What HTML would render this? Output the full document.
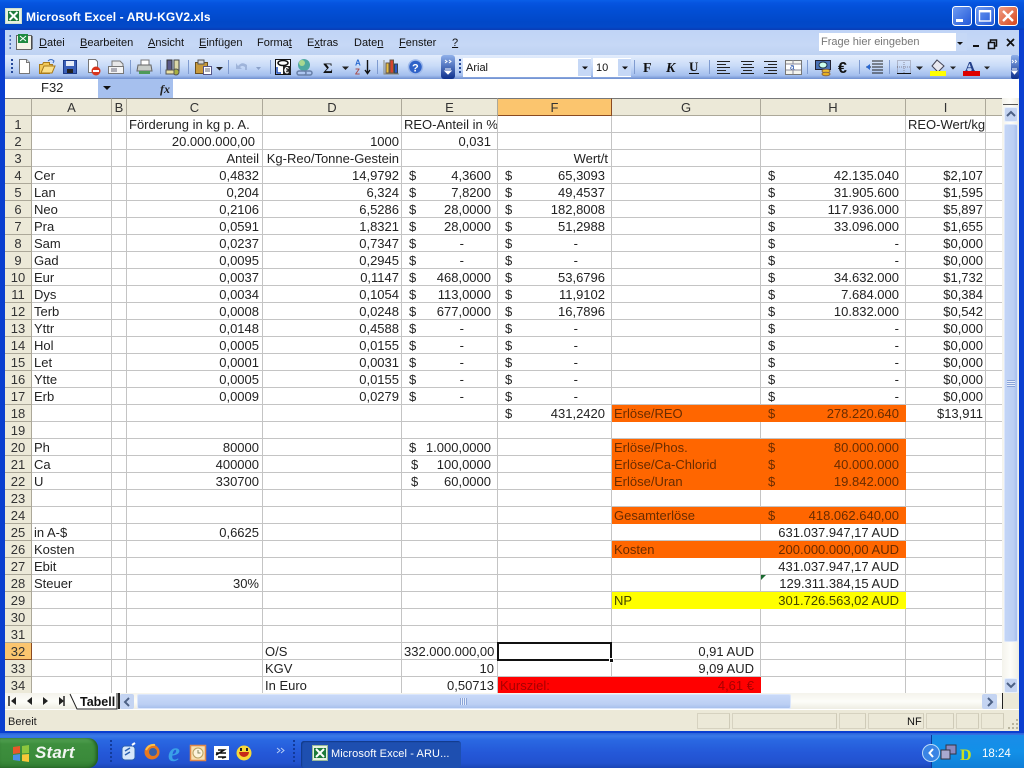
<!DOCTYPE html>
<html><head><meta charset="utf-8"><title>Microsoft Excel - ARU-KGV2.xls</title>
<style>
html,body{margin:0;padding:0;width:1024px;height:768px;overflow:hidden;background:#0a3fd0}
*{box-sizing:border-box}
body{font-family:"Liberation Sans",Arial,sans-serif;position:relative}
.p{position:absolute}
.t{position:absolute;white-space:nowrap;line-height:14px}
#title{left:0;top:0;width:1024px;height:30px;background:linear-gradient(#0a5fe8 0,#0654e0 3px,#0350d8 8px,#0148c8 22px,#0349c8 27px,#0a3cb4 30px)}
#menu{left:5px;top:30px;width:1014px;height:25px;background:linear-gradient(#c0d4f6,#c6d8f6 60%,#bed2f2)}
#menu .t{font-size:11px;color:#111;top:6px}
#tb{left:5px;top:55px;width:1014px;height:24px;background:linear-gradient(#e3edfc,#c9dbf8 45%,#a4bfee 85%,#6f90d0)}
#fx{left:5px;top:79px;width:1014px;height:19px;background:#fff}
table{position:absolute;left:5px;top:98px;width:998px;border-collapse:separate;border-spacing:0;table-layout:fixed;font-size:13px;color:#222;background:#fff}
td{height:17px;padding:2px 3px 0 2px;line-height:14px;border-right:1px solid #c4c4c4;border-bottom:1px solid #c4c4c4;white-space:nowrap;overflow:hidden}
td.h{background:#ece9d8;text-align:center;padding:2px 0 0;border-right:1px solid #aca899;border-bottom:1px solid #aca899;color:#333}
tr.hh td{height:18px;border-top:1px solid #777}
td.s{background:#fbc56e;border-right:1px solid #8a4a20;border-bottom:1px solid #8a4a20}
.r{text-align:right}.a{text-align:right;padding-right:6px}.m{padding-right:7px}.e{text-align:right;padding-right:2px}.e4{text-align:right;padding-right:3px}
i{font-style:normal;float:left;margin-left:5px}i.w{margin-left:7px}
.d{padding-right:33px}.dh{padding-right:6px}
.o{background:#ff6600;color:#6a2c00;border-color:#ff6600}
.y{background:#ffff00;color:#444400;border-color:#ffff00}
.x{background:#ff0000;color:#a80000;border-color:#ff0000}
#status{left:5px;top:710px;width:1014px;height:21px;background:#ece9d8;font-size:11px;color:#222}
.pn{position:absolute;top:3px;height:16px;border:1px solid #d6d2c0;border-right-color:#cfcbb8}
#task{left:0;top:733px;width:1024px;height:35px;background:linear-gradient(#2a62d8 0,#3a7ae8 3px,#2a68e2 7px,#2458d8 20px,#2252cf 30px,#1a45b5 35px)}
</style></head><body>
<div class="p" id="title">
<svg class="p" style="left:5px;top:8px" width="17" height="16" viewBox="0 0 17 16"><rect x=".5" y=".5" width="16" height="15" fill="#e8f2e0" stroke="#cfe0cf"/><rect x="3" y="3" width="11" height="10" fill="#1d7a3a"/><path d="M4.5 4l8 8M12.5 4l-8 8" stroke="#fff" stroke-width="2"/></svg>
<div class="t" style="left:26px;top:10px;color:#fff;font-weight:bold;font-size:12px;letter-spacing:.1px">Microsoft Excel - ARU-KGV2.xls</div>
<svg class="p" style="left:950px;top:5px" width="70" height="22" viewBox="0 0 70 22">
<defs><linearGradient id="bb" x1="0" y1="0" x2="1" y2="1"><stop offset="0" stop-color="#6f9cf2"/><stop offset="1" stop-color="#2257d8"/></linearGradient><linearGradient id="br" x1="0" y1="0" x2="1" y2="1"><stop offset="0" stop-color="#f0a088"/><stop offset="1" stop-color="#d84418"/></linearGradient></defs>
<rect x="2.5" y="1.5" width="19" height="19" rx="3" fill="url(#bb)" stroke="#fff"/><rect x="6" y="14" width="7" height="3" fill="#fff"/>
<rect x="25.5" y="1.5" width="19" height="19" rx="3" fill="url(#bb)" stroke="#fff"/><rect x="29.5" y="6" width="11" height="10" fill="none" stroke="#fff" stroke-width="1.4"/><rect x="29" y="5" width="12" height="2.4" fill="#fff"/>
<rect x="48.5" y="1.5" width="19" height="19" rx="3" fill="url(#br)" stroke="#fff"/><path d="M53 6l10 10M63 6l-10 10" stroke="#fff" stroke-width="2.4"/></svg>
</div>
<div class="p" id="menu">
<svg class="p" style="left:3px;top:2px" width="28" height="20" viewBox="0 0 28 20"><path d="M1.5 4h1.5M1.5 8h1.5M1.5 12h1.5M1.5 16h1.5" stroke="#24489a" stroke-width="1.6"/><rect x="8.5" y="3.5" width="15" height="14" fill="#f4f4e8" stroke="#666"/><rect x="10" y="2" width="10" height="9" fill="#1d8a40"/><path d="M12 4l6 5M18 4l-6 5" stroke="#fff"/><path d="M24 4v13" stroke="#333"/></svg>
<div class="t" style="left:34px"><u>D</u>atei</div>
<div class="t" style="left:75px"><u>B</u>earbeiten</div>
<div class="t" style="left:143px"><u>A</u>nsicht</div>
<div class="t" style="left:194px"><u>E</u>infügen</div>
<div class="t" style="left:252px">Forma<u>t</u></div>
<div class="t" style="left:302px">E<u>x</u>tras</div>
<div class="t" style="left:349px">Date<u>n</u></div>
<div class="t" style="left:394px"><u>F</u>enster</div>
<div class="t" style="left:447px"><u>?</u></div>
<div class="p" style="left:814px;top:3px;width:138px;height:18px;background:#fff"></div>
<div class="t" style="left:816px;top:5px;color:#777">Frage hier eingeben</div>
<div class="p" style="left:951px;top:3px;width:11px;height:18px;background:#c6d8f6"></div>
<svg class="p" style="left:946px;top:4px" width="68" height="18" viewBox="0 0 68 18"><path d="M6 8h6l-3 3z" fill="#111"/><rect x="22" y="11" width="6" height="2" fill="#111"/><path d="M37.5 8.5h6v6h-6zM39.5 8.5v-2.500h6v6h-2" fill="none" stroke="#111" stroke-width="1.5"/><path d="M56 5l7 7M63 5l-7 7" stroke="#111" stroke-width="1.8"/></svg>
</div>
<div class="p" id="tb">
<svg class="p" style="left:0;top:0" width="1014" height="24" viewBox="5 55 1014 24">
<defs><linearGradient id="ch" x1="0" y1="0" x2="0" y2="1"><stop offset="0" stop-color="#8fb0ea"/><stop offset="1" stop-color="#0c2f8c"/></linearGradient></defs>
<path d="M11 60h2M11 64h2M11 68h2M11 72h2" stroke="#24489a" stroke-width="2"/>
<path d="M19.5 59.5h7l3 3v11h-10z" fill="#fff" stroke="#777"/><path d="M26.5 59.5v3h3" fill="#ddd" stroke="#777"/>
<path d="M39.5 64.500h3l1-2h6v2h3l-3 9h-10z" fill="#f2c95a" stroke="#a87a1a"/><path d="M41 73l3-7h11l-3 7z" fill="#fbe08a" stroke="#a87a1a"/><path d="M48 61q3-3 6 0l-1 2" fill="none" stroke="#3a6ac0"/>
<rect x="63.5" y="60.5" width="13" height="13" fill="#3a5fb8" stroke="#1c3a88"/><rect x="66" y="61" width="8" height="5" fill="#e6ecf8"/><rect x="67" y="69" width="6" height="4" fill="#222"/>
<path d="M88.5 59.5h7l2 2v11h-9z" fill="#fff" stroke="#777"/><circle cx="96" cy="71" r="4.5" fill="#d8351c"/><rect x="93" y="70" width="6" height="2" fill="#fff"/>
<path d="M112 61h8l3 3v9h-11z" fill="#e8e8e8" stroke="#777"/><rect x="108.5" y="66.5" width="15" height="7" fill="#f4f4f4" stroke="#777"/><path d="M111 69h6M111 71h6" stroke="#667"/>
<path d="M130.5 60v14M160.5 60v14M188.5 60v14M228.5 60v14M270.5 60v14M377.5 60v14" stroke="#7f9bd0"/>
<path d="M141 60h8v5h-8z" fill="#fff" stroke="#777"/><path d="M138 65h13l1 6h-15z" fill="#c8ccc8" stroke="#666"/><rect x="139" y="71" width="11" height="3" fill="#4f9a58"/>
<rect x="167" y="60" width="5" height="11" fill="#5a5a8a" stroke="#333"/><rect x="174" y="60" width="5" height="11" fill="#dcd8a8" stroke="#444"/><circle cx="176" cy="72" r="3" fill="#a8b040" stroke="#555"/><rect x="166" y="70" width="8" height="4" fill="#eae0a0" stroke="#555"/>
<rect x="195.5" y="62.5" width="12" height="11" fill="#c89a3c" stroke="#6a5020"/><rect x="198" y="60" width="6" height="4" fill="#d8d8d8" stroke="#555"/><rect x="203.5" y="66.5" width="8" height="8" fill="#fff" stroke="#558"/><path d="M205 69h5M205 71h5" stroke="#667"/>
<path d="M216 67h7l-3.5 3.5z" fill="#222"/>
<path d="M238 66q4-5 9-1v5h-2v-3q-3-2-5 0l2 2h-6v-6z" fill="#9fb4da"/><path d="M256 67h5l-2.5 3z" fill="#8aa0c8"/>
<rect x="275.5" y="59.5" width="15" height="15" fill="#fff" stroke="#111"/><ellipse cx="283" cy="63" rx="5" ry="2.5" fill="none" stroke="#111" stroke-width="1.5"/><rect x="283" y="66" width="8" height="8" fill="#222"/><text x="284" y="73.5" font-size="9" font-weight="bold" fill="#fff" font-family="Liberation Sans">€</text><path d="M277 67v6h4" stroke="#1848b8" fill="none" stroke-width="1.5"/>
<circle cx="304" cy="65" r="6" fill="#4fa8a0"/><circle cx="302" cy="63" r="3" fill="#a8d890"/><path d="M299 71h5a2 2 0 0 1 0 4h-5a2 2 0 0 1 0-4zM305 71h5a2 2 0 0 1 0 4h-5" fill="none" stroke="#6880a8" stroke-width="1.5"/>
<text x="323" y="73" font-size="15" font-weight="bold" fill="#111" font-family="Liberation Serif">Σ</text><path d="M342 66.500h7l-3.5 3.5z" fill="#222"/>
<text x="355" y="65.500" font-size="8" font-weight="bold" fill="#2a6ad0" font-family="Liberation Sans">A</text><text x="355" y="74.5" font-size="8" font-weight="bold" fill="#a85050" font-family="Liberation Sans">Z</text><path d="M367.5 60v13M365 70l2.5 3.5 2.500-3.5" stroke="#111" fill="none" stroke-width="1.4"/>
<path d="M384 60v14h15" fill="none" stroke="#887"/><rect x="386" y="63" width="3" height="10" fill="#e8c040" stroke="#654"/><rect x="390" y="60" width="3.5" height="13" fill="#d8442c" stroke="#654"/><rect x="394.5" y="64" width="3" height="9" fill="#2a58c8" stroke="#345"/>
<circle cx="415.5" cy="67" r="7" fill="#2f62c8" stroke="#9db8ea" stroke-width="1.5"/><text x="412" y="71.5" font-size="11" font-weight="bold" fill="#fff" font-family="Liberation Sans">?</text>
<rect x="441" y="55" width="14" height="24" rx="3" fill="url(#ch)"/><path d="M445 60l2 1.5-2 1.5M449 60l2 1.5-2 1.5" stroke="#fff" fill="none"/><path d="M445 69h6M445 71h6l-3 3z" stroke="#fff" fill="#fff"/>
<path d="M459 60h2M459 64h2M459 68h2M459 72h2" stroke="#24489a" stroke-width="2"/>
<rect x="463" y="58" width="128" height="19" fill="#fff"/><rect x="578" y="59" width="13" height="17" fill="#c6d8f6"/><path d="M582 66.500h6l-3 3z" fill="#111"/>
<rect x="593" y="58" width="38" height="19" fill="#fff"/><rect x="618" y="59" width="13" height="17" fill="#c6d8f6"/><path d="M622 66.500h6l-3 3z" fill="#111"/>
<path d="M634.5 60v14M709.5 60v14M807.5 60v14M859.5 60v14M889.5 60v14" stroke="#7f9bd0"/>
<text x="466" y="71" font-size="11" fill="#111" font-family="Liberation Sans">Arial</text><text x="596" y="71" font-size="11" fill="#111" font-family="Liberation Sans">10</text>
<text x="643" y="72" font-size="14" font-weight="bold" fill="#111" font-family="Liberation Serif">F</text><text x="666" y="72" font-size="14" font-weight="bold" font-style="italic" fill="#111" font-family="Liberation Serif">K</text><text x="689" y="71" font-size="13" font-weight="bold" fill="#111" font-family="Liberation Serif">U</text><path d="M689 73.5h10" stroke="#111"/>
<path d="M717 61.5h13M717 64.5h9M717 67.5h13M717 70.5h9M717 73.5h13M741 61.5h13M743 64.5h9M741 67.5h13M743 70.5h9M741 73.5h13M764 61.5h13M768 64.5h9M764 67.5h13M768 70.5h9M764 73.5h13" stroke="#222"/>
<rect x="785.5" y="60.5" width="16" height="14" fill="#f4f4ee" stroke="#777"/><rect x="786" y="64" width="15" height="6" fill="#fff"/><path d="M786 64h15M786 70h15M793 60v4M793 70v4" stroke="#889"/><text x="790" y="69.5" font-size="8" fill="#1848a8" font-family="Liberation Sans">a</text>
<rect x="815.5" y="60.5" width="15" height="9" fill="#4a72b8" stroke="#223"/><ellipse cx="823" cy="65" rx="4" ry="3" fill="#cfe" stroke="#234"/><ellipse cx="826" cy="71" rx="4" ry="1.8" fill="#f0c030" stroke="#864"/><ellipse cx="826" cy="74" rx="4" ry="1.8" fill="#e8b020" stroke="#864"/>
<text x="838" y="73" font-size="16" font-weight="bold" fill="#111" font-family="Liberation Sans">€</text>
<path d="M872 61h11M872 64h11M872 67h11M872 70h11M872 73h11M866 67h5" stroke="#222"/><path d="M866 67l4-3v6z" fill="#2a68d0"/>
<path d="M897.5 60.5h13v13h-13zM904 60v14M897 67h14" fill="none" stroke="#889" stroke-dasharray="1 1"/><path d="M897 73.5h14" stroke="#111"/><path d="M916 66.500h7l-3.5 3.5z" fill="#222"/>
<path d="M937 60l7 6-6 6-6-6z" fill="#e8e8f0" stroke="#445"/><rect x="930" y="71" width="16" height="5" fill="#ffff00"/><path d="M950 66.500h6l-3 3z" fill="#222"/>
<text x="965" y="71" font-size="14" font-weight="bold" fill="#24408a" font-family="Liberation Serif">A</text><rect x="963" y="71" width="17" height="5" fill="#dd0000"/><path d="M984 66.500h6l-3 3z" fill="#222"/>
<rect x="1011" y="55" width="8" height="24" rx="2" fill="url(#ch)"/><path d="M1012 60l1.5 1.5-1.5 1.5M1015 60l1.5 1.5-1.5 1.5" stroke="#fff" fill="none"/><path d="M1012 69h5M1012 71h5l-2.5 3z" stroke="#fff" fill="#fff"/>
</svg>
</div>
<div class="p" id="fx">
<div class="p" style="left:93px;top:0;width:75px;height:19px;background:#a6c0ee"></div>
<div class="t" style="left:36px;top:2px;font-size:13px;color:#222">F32</div>
<svg class="p" style="left:98px;top:6px" width="10" height="8"><path d="M0 1h8l-4 4z" fill="#111"/></svg>
<div class="t" style="left:155px;top:3px;font:italic bold 12px/14px 'Liberation Serif',serif;color:#222">fx</div>
</div>
<table>
<colgroup><col style="width:27px"><col style="width:80px"><col style="width:15px"><col style="width:136px"><col style="width:139px"><col style="width:96px"><col style="width:114px"><col style="width:149px"><col style="width:145px"><col style="width:80px"><col style="width:17px"></colgroup>
<tr class="hh"><td class="h"></td><td class="h">A</td><td class="h">B</td><td class="h">C</td><td class="h">D</td><td class="h">E</td><td class="h s">F</td><td class="h">G</td><td class="h">H</td><td class="h">I</td><td class="h"></td></tr>
<tr><td class="h">1</td><td></td><td></td><td>Förderung in kg p. A.</td><td></td><td>REO-Anteil in %</td><td></td><td></td><td></td><td>REO-Wert/kg</td><td></td></tr>
<tr><td class="h">2</td><td></td><td></td><td class="r m">20.000.000,00</td><td class="e">1000</td><td class="a">0,031</td><td></td><td></td><td></td><td></td><td></td></tr>
<tr><td class="h">3</td><td></td><td></td><td class="r">Anteil</td><td class="e">Kg-Reo/Tonne-Gestein</td><td></td><td class="r">Wert/t</td><td></td><td></td><td></td><td></td></tr>
<tr><td class="h">4</td><td>Cer</td><td></td><td class="r">0,4832</td><td class="e">14,9792</td><td class="a"><i>$</i>4,3600</td><td class="a"><i>$</i>65,3093</td><td></td><td class="a"><i>$</i>42.135.040</td><td class="e">$2,107</td><td></td></tr>
<tr><td class="h">5</td><td>Lan</td><td></td><td class="r">0,204</td><td class="e">6,324</td><td class="a"><i>$</i>7,8200</td><td class="a"><i>$</i>49,4537</td><td></td><td class="a"><i>$</i>31.905.600</td><td class="e">$1,595</td><td></td></tr>
<tr><td class="h">6</td><td>Neo</td><td></td><td class="r">0,2106</td><td class="e">6,5286</td><td class="a"><i>$</i>28,0000</td><td class="a"><i>$</i>182,8008</td><td></td><td class="a"><i>$</i>117.936.000</td><td class="e">$5,897</td><td></td></tr>
<tr><td class="h">7</td><td>Pra</td><td></td><td class="r">0,0591</td><td class="e">1,8321</td><td class="a"><i>$</i>28,0000</td><td class="a"><i>$</i>51,2988</td><td></td><td class="a"><i>$</i>33.096.000</td><td class="e">$1,655</td><td></td></tr>
<tr><td class="h">8</td><td>Sam</td><td></td><td class="r">0,0237</td><td class="e">0,7347</td><td class="a d"><i>$</i>-</td><td class="a d"><i>$</i>-</td><td></td><td class="a dh"><i>$</i>-</td><td class="e">$0,000</td><td></td></tr>
<tr><td class="h">9</td><td>Gad</td><td></td><td class="r">0,0095</td><td class="e">0,2945</td><td class="a d"><i>$</i>-</td><td class="a d"><i>$</i>-</td><td></td><td class="a dh"><i>$</i>-</td><td class="e">$0,000</td><td></td></tr>
<tr><td class="h">10</td><td>Eur</td><td></td><td class="r">0,0037</td><td class="e">0,1147</td><td class="a"><i>$</i>468,0000</td><td class="a"><i>$</i>53,6796</td><td></td><td class="a"><i>$</i>34.632.000</td><td class="e">$1,732</td><td></td></tr>
<tr><td class="h">11</td><td>Dys</td><td></td><td class="r">0,0034</td><td class="e">0,1054</td><td class="a"><i>$</i>113,0000</td><td class="a"><i>$</i>11,9102</td><td></td><td class="a"><i>$</i>7.684.000</td><td class="e">$0,384</td><td></td></tr>
<tr><td class="h">12</td><td>Terb</td><td></td><td class="r">0,0008</td><td class="e">0,0248</td><td class="a"><i>$</i>677,0000</td><td class="a"><i>$</i>16,7896</td><td></td><td class="a"><i>$</i>10.832.000</td><td class="e">$0,542</td><td></td></tr>
<tr><td class="h">13</td><td>Yttr</td><td></td><td class="r">0,0148</td><td class="e">0,4588</td><td class="a d"><i>$</i>-</td><td class="a d"><i>$</i>-</td><td></td><td class="a dh"><i>$</i>-</td><td class="e">$0,000</td><td></td></tr>
<tr><td class="h">14</td><td>Hol</td><td></td><td class="r">0,0005</td><td class="e">0,0155</td><td class="a d"><i>$</i>-</td><td class="a d"><i>$</i>-</td><td></td><td class="a dh"><i>$</i>-</td><td class="e">$0,000</td><td></td></tr>
<tr><td class="h">15</td><td>Let</td><td></td><td class="r">0,0001</td><td class="e">0,0031</td><td class="a d"><i>$</i>-</td><td class="a d"><i>$</i>-</td><td></td><td class="a dh"><i>$</i>-</td><td class="e">$0,000</td><td></td></tr>
<tr><td class="h">16</td><td>Ytte</td><td></td><td class="r">0,0005</td><td class="e">0,0155</td><td class="a d"><i>$</i>-</td><td class="a d"><i>$</i>-</td><td></td><td class="a dh"><i>$</i>-</td><td class="e">$0,000</td><td></td></tr>
<tr><td class="h">17</td><td>Erb</td><td></td><td class="r">0,0009</td><td class="e">0,0279</td><td class="a d"><i>$</i>-</td><td class="a d"><i>$</i>-</td><td></td><td class="a dh"><i>$</i>-</td><td class="e">$0,000</td><td></td></tr>
<tr><td class="h">18</td><td></td><td></td><td></td><td></td><td></td><td class="a"><i>$</i>431,2420</td><td class="o">Erlöse/REO</td><td class="a o"><i>$</i>278.220.640</td><td class="e">$13,911</td><td></td></tr>
<tr><td class="h">19</td><td></td><td></td><td></td><td></td><td></td><td></td><td></td><td></td><td></td><td></td></tr>
<tr><td class="h">20</td><td>Ph</td><td></td><td class="r">80000</td><td></td><td class="a"><i>$</i>1.000,0000</td><td></td><td class="o">Erlöse/Phos.</td><td class="a o"><i>$</i>80.000.000</td><td></td><td></td></tr>
<tr><td class="h">21</td><td>Ca</td><td></td><td class="r">400000</td><td></td><td class="a"><i class="w">$</i>100,0000</td><td></td><td class="o">Erlöse/Ca-Chlorid</td><td class="a o"><i>$</i>40.000.000</td><td></td><td></td></tr>
<tr><td class="h">22</td><td>U</td><td></td><td class="r">330700</td><td></td><td class="a"><i class="w">$</i>60,0000</td><td></td><td class="o">Erlöse/Uran</td><td class="a o"><i>$</i>19.842.000</td><td></td><td></td></tr>
<tr><td class="h">23</td><td></td><td></td><td></td><td></td><td></td><td></td><td></td><td></td><td></td><td></td></tr>
<tr><td class="h">24</td><td></td><td></td><td></td><td></td><td></td><td></td><td class="o">Gesamterlöse</td><td class="a o"><i>$</i>418.062.640,00</td><td></td><td></td></tr>
<tr><td class="h">25</td><td>in A-$</td><td></td><td class="r">0,6625</td><td></td><td></td><td></td><td></td><td class="a">631.037.947,17 AUD</td><td></td><td></td></tr>
<tr><td class="h">26</td><td>Kosten</td><td></td><td></td><td></td><td></td><td></td><td class="o">Kosten</td><td class="a o">200.000.000,00 AUD</td><td></td><td></td></tr>
<tr><td class="h">27</td><td>Ebit</td><td></td><td></td><td></td><td></td><td></td><td></td><td class="a">431.037.947,17 AUD</td><td></td><td></td></tr>
<tr><td class="h">28</td><td>Steuer</td><td></td><td class="r">30%</td><td></td><td></td><td></td><td></td><td class="a">129.311.384,15 AUD</td><td></td><td></td></tr>
<tr><td class="h">29</td><td></td><td></td><td></td><td></td><td></td><td></td><td class="y">NP</td><td class="a y">301.726.563,02 AUD</td><td></td><td></td></tr>
<tr><td class="h">30</td><td></td><td></td><td></td><td></td><td></td><td></td><td></td><td></td><td></td><td></td></tr>
<tr><td class="h">31</td><td></td><td></td><td></td><td></td><td></td><td></td><td></td><td></td><td></td><td></td></tr>
<tr><td class="h s">32</td><td></td><td></td><td></td><td>O/S</td><td class="e4">332.000.000,00</td><td></td><td class="r" style="padding-right:6px">0,91 AUD</td><td></td><td></td><td></td></tr>
<tr><td class="h">33</td><td></td><td></td><td></td><td>KGV</td><td class="e4">10</td><td></td><td class="r" style="padding-right:6px">9,09 AUD</td><td></td><td></td><td></td></tr>
<tr><td class="h">34</td><td></td><td></td><td></td><td>In Euro</td><td class="e4">0,50713</td><td class="x">Kursziel:</td><td class="r x" style="padding-right:6px">4,61 €</td><td></td><td></td><td></td></tr>
</table>
<div class="p" style="left:497px;top:642px;width:115px;height:19px;border:2px solid #111"></div>
<div class="p" style="left:609px;top:658px;width:5px;height:5px;background:#111;border:1px solid #fff"></div>
<svg class="p" style="left:760px;top:574px" width="6" height="6"><path d="M1 1h5l-5 5z" fill="#1a6a30"/></svg>
<div class="p" style="left:1002px;top:98px;width:17px;height:595px;background:linear-gradient(90deg,#f4f3ec,#fdfdf9 50%,#eeede3)"></div>
<div class="p" style="left:1003px;top:104px;width:15px;height:1px;background:#555"></div>
<div class="p" style="left:1004px;top:107px;width:14px;height:15px;background:#c4d4f2;border:1px solid #e8f0fc;border-radius:2px"></div>
<svg class="p" style="left:1006px;top:110px" width="10" height="8"><path d="M1 6l4-4 4 4" fill="none" stroke="#4d6185" stroke-width="2"/></svg>
<div class="p" style="left:1004px;top:124px;width:14px;height:518px;background:linear-gradient(90deg,#c3d5f6,#bcd0f4 70%,#a8c0ec);border:1px solid #dbe6fb;border-radius:2px"></div>
<div class="p" style="left:1007px;top:380px;width:8px;height:7px;background:repeating-linear-gradient(#8aa4d8 0,#8aa4d8 1px,#e6eefc 1px,#e6eefc 2px)"></div>
<div class="p" style="left:1004px;top:678px;width:14px;height:15px;background:#c4d4f2;border:1px solid #e8f0fc;border-radius:2px"></div>
<svg class="p" style="left:1006px;top:681px" width="10" height="8"><path d="M1 2l4 4 4-4" fill="none" stroke="#4d6185" stroke-width="2"/></svg>
<div class="p" style="left:5px;top:693px;width:1014px;height:17px;background:linear-gradient(#f4f3ec,#fdfdf9 50%,#ecebe0)"></div>
<div class="p" style="left:5px;top:709px;width:1014px;height:1px;background:#fff"></div>
<svg class="p" style="left:5px;top:693px" width="115" height="17" viewBox="5 693 115 17"><path d="M9 696v10" stroke="#222" stroke-width="1.5"/><path d="M16 697l-5 4 5 4zM32 697l-5 4 5 4zM43 697l5 4-5 4zM59 697l5 4-5 4z" fill="#222"/><path d="M64 696v10" stroke="#222" stroke-width="1.5"/><path d="M70 694l7 15h40V693" fill="#fff" stroke="#222"/></svg>
<div class="t" style="left:80px;top:695px;font-size:12.5px;font-weight:bold;color:#111">Tabell</div>
<div class="p" style="left:118px;top:693px;width:2px;height:16px;background:#222"></div>
<div class="p" style="left:120px;top:694px;width:14px;height:15px;background:#c4d4f2;border-radius:2px"></div>
<svg class="p" style="left:123px;top:697px" width="8" height="10"><path d="M6 1L2 5l4 4" fill="none" stroke="#4d6185" stroke-width="2"/></svg>
<div class="p" style="left:137px;top:694px;width:654px;height:15px;background:linear-gradient(#c8d9f8,#bccff4 70%,#a8c0ec);border-radius:2px;border:1px solid #dbe6fb"></div>
<div class="p" style="left:460px;top:698px;width:7px;height:7px;background:repeating-linear-gradient(90deg,#8aa4d8 0,#8aa4d8 1px,#e6eefc 1px,#e6eefc 2px)"></div>
<div class="p" style="left:982px;top:694px;width:15px;height:15px;background:#c4d4f2;border-radius:2px"></div>
<svg class="p" style="left:986px;top:697px" width="8" height="10"><path d="M2 1l4 4-4 4" fill="none" stroke="#4d6185" stroke-width="2"/></svg>
<div class="p" style="left:1002px;top:693px;width:1px;height:16px;background:#222"></div>
<div class="p" style="left:1003px;top:693px;width:16px;height:16px;background:#ece9d8"></div>
<div class="p" id="status">
<div class="t" style="left:3px;top:5px">Bereit</div>
<div class="pn" style="left:692px;width:33px"></div><div class="pn" style="left:727px;width:105px"></div><div class="pn" style="left:834px;width:27px"></div><div class="pn" style="left:863px;width:56px"></div><div class="pn" style="left:921px;width:28px"></div><div class="pn" style="left:951px;width:23px"></div><div class="pn" style="left:976px;width:23px"></div>
<div class="t" style="left:902px;top:5px;color:#111">NF</div>
<svg class="p" style="left:1002px;top:8px" width="12" height="12"><path d="M9 1h2v2H9zM5 5h2v2H5zM9 5h2v2H9zM1 9h2v2H1zM5 9h2v2H5zM9 9h2v2H9z" fill="#b8b49e"/></svg>
</div>
<div class="p" id="task">
<div class="p" style="left:0;top:5px;width:98px;height:30px;background:linear-gradient(#5aa85a,#3e8f3e 20%,#3a8a3a 75%,#2f7a30);border-radius:0 10px 10px 0;box-shadow:inset -2px 0 3px #1f5a20"></div>
<svg class="p" style="left:11px;top:11px" width="20" height="19" viewBox="0 0 20 19"><path d="M2 3l7-1v7l-7 1z" fill="#e8582a"/><path d="M11 2l7-1v8l-7 .5z" fill="#8cc63e"/><path d="M2 11l7-1v7l-7-1z" fill="#4a90e8"/><path d="M11 10.5l7-.5v8l-7-1z" fill="#f8c838"/></svg>
<div class="t" style="left:35px;top:10px;font:italic bold 17px/20px 'Liberation Sans',sans-serif;color:#f2f6f2;letter-spacing:.2px">Start</div>
<svg class="p" style="left:105px;top:0" width="170" height="35" viewBox="105 733 170 35">
<path d="M110 741h2M110 745h2M110 749h2M110 753h2M110 757h2M110 761h2" stroke="#123a9a" stroke-width="2"/>
<rect x="122" y="746" width="13" height="14" rx="3" fill="#d8e8fa" stroke="#2a60b0"/><path d="M125 751l5-3M125 755l5-3" stroke="#2a60b0" stroke-width="1.5"/><path d="M132 745l3-2" stroke="#fff" stroke-width="2"/>
<circle cx="152" cy="752" r="7.5" fill="#e8781e"/><circle cx="153" cy="752" r="4" fill="#3860a8"/><path d="M146 750q3-6 9-5" stroke="#fbc04a" stroke-width="2" fill="none"/>
<text x="168" y="761" font-size="27" font-weight="bold" font-style="italic" fill="#3aa0e8" font-family="Liberation Serif">e</text>
<rect x="190.5" y="745.5" width="15" height="15" fill="#f8e0b0" stroke="#e08848" stroke-width="1.5"/><circle cx="198" cy="753" r="5" fill="#fdf4dc" stroke="#b8a060"/><path d="M198 750v3h2.5" stroke="#886" fill="none"/>
<rect x="214" y="746" width="15" height="14" fill="#fff"/><path d="M216 755l8-5h-6M218 757h8l-4 1M216 753h10" stroke="#111" stroke-width="1.6" fill="none"/>
<circle cx="244" cy="753" r="7.5" fill="#f8d838"/><path d="M239 752h10a5 5 0 0 1-10 0z" fill="#c82818"/><rect x="240" y="748" width="2" height="3" fill="#222"/><rect x="246" y="748" width="2" height="3" fill="#222"/>
</svg>
<svg class="p" style="left:270px;top:0" width="30" height="35" viewBox="270 733 30 35"><path d="M277 748l3 2.5-3 2.5M281 748l3 2.5-3 2.500" fill="none" stroke="#b8cdf4"/><path d="M293 741h2M293 745h2M293 749h2M293 753h2M293 757h2M293 761h2" stroke="#123a9a" stroke-width="2"/></svg>
<div class="p" style="left:301px;top:8px;width:160px;height:27px;background:#1e4fb0;border-radius:3px;box-shadow:inset 1px 1px 1px #123a88"></div>
<svg class="p" style="left:312px;top:12px" width="16" height="16" viewBox="0 0 16 16"><rect x=".5" y=".5" width="15" height="15" fill="#e8f2e0" stroke="#98b898"/><rect x="2" y="3" width="12" height="10" fill="#1d7a3a"/><path d="M4 4l8 8M12 4l-8 8" stroke="#fff" stroke-width="2"/></svg>
<div class="t" style="left:331px;top:14px;font-size:11px;letter-spacing:.1px;color:#fff">Microsoft Excel - ARU...</div>
<div class="p" style="left:931px;top:2px;width:93px;height:33px;background:linear-gradient(#1a8ce8,#1290e8 50%,#0f7fd8);border-left:1px solid #0a3a9a"></div>
<svg class="p" style="left:921px;top:0" width="90" height="35" viewBox="921 733 90 35"><circle cx="931" cy="753" r="8.5" fill="#3a84e4" stroke="#bcdcf8"/><path d="M933 749l-3.5 4 3.5 4" stroke="#fff" stroke-width="2" fill="none"/>
<rect x="946" y="745" width="10" height="9" fill="#8a8ac0" stroke="#334"/><rect x="941" y="750" width="9" height="9" fill="#a8a8d0" stroke="#334"/>
<text x="960" y="760" font-size="16" font-weight="bold" fill="#c8e020" font-family="Liberation Serif">D</text></svg>
<div class="t" style="left:982px;top:14px;font-size:11.5px;color:#fff">18:24</div>
</div>
</body></html>
